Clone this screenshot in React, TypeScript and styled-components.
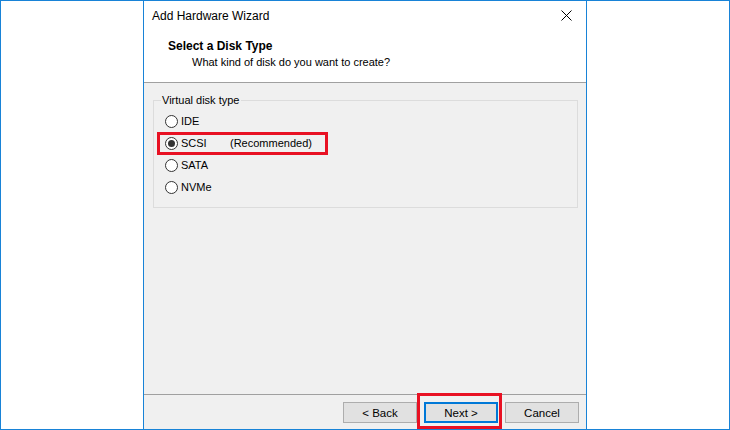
import React from "react";
import styled, { createGlobalStyle } from "styled-components";

const Global = createGlobalStyle`
  html, body { margin: 0; padding: 0; background: #fff; }
  body { font-family: "Liberation Sans", Arial, sans-serif; font-size: 11px; color: #000; }
`;

const Page = styled.div`
  box-sizing: border-box;
  width: 730px;
  height: 430px;
  border: 1px solid #1883d7;
  display: flex;
  background: #fff;
`;

const Side = styled.div<{ $w?: number }>`
  flex: ${(p) => (p.$w ? `0 0 ${p.$w}px` : "1 1 auto")};
  background: #fff;
`;

const Dialog = styled.div`
  box-sizing: border-box;
  flex: 0 0 444px;
  border-left: 1px solid #1883d7;
  border-right: 1px solid #1883d7;
  display: flex;
  flex-direction: column;
`;

const TitleBar = styled.div`
  height: 29px;
  display: flex;
  align-items: center;
  justify-content: space-between;
  padding: 0 8px 0 8px;
  background: #fff;
`;

const TitleText = styled.span`
  font-size: 12px;
  padding-top: 1px;
`;

const CloseBtn = styled.span`
  display: flex;
  align-items: center;
  justify-content: center;
  width: 20px;
  height: 20px;
  margin-right: 2px;
`;

const Header = styled.div`
  height: 53px;
  box-sizing: border-box;
  background: #fff;
  border-bottom: 1px solid #a0a0a0;
  padding: 9px 0 0 24px;
`;

const HeaderTitle = styled.div`
  font-weight: bold;
  font-size: 12px;
  line-height: 15px;
`;

const HeaderSub = styled.div`
  font-size: 11px;
  line-height: 15px;
  margin-top: 1px;
  padding-left: 24px;
`;

const Body = styled.div`
  flex: 1 1 auto;
  background: #f0f0f0;
  border-bottom: 1px solid #a0a0a0;
  padding: 10px 8px 0 9px;
`;

const Group = styled.fieldset`
  box-sizing: border-box;
  height: 115px;
  margin: 0;
  padding: 3px 0 0 11px;
  border: 1px solid #dcdcdc;
  position: relative;
`;

const Legend = styled.legend`
  padding: 0 2px 0 1px;
  margin-left: -4px;
  font-size: 11px;
  line-height: 14px;
`;

const Row = styled.div<{ $hl?: boolean }>`
  position: relative;
  height: 22px;
  display: flex;
  align-items: center;
  ${(p) =>
    p.$hl &&
    `
    &::after {
      content: "";
      position: absolute;
      left: -8px;
      top: 0px;
      width: 171px;
      height: 23px;
      box-sizing: border-box;
      border: 3px solid #e81123;
      pointer-events: none;
    }
  `}
`;

const Radio = styled.span<{ $on?: boolean }>`
  box-sizing: border-box;
  width: 13px;
  height: 13px;
  border-radius: 50%;
  border: 1px solid #333;
  background: #fff;
  display: inline-flex;
  align-items: center;
  justify-content: center;
  margin-right: 3px;
  &::before {
    content: "";
    display: ${(p) => (p.$on ? "block" : "none")};
    width: 7px;
    height: 7px;
    border-radius: 50%;
    background: #333;
  }
`;

const Label = styled.span<{ $w?: number }>`
  display: inline-block;
  ${(p) => (p.$w ? `width: ${p.$w}px;` : "")}
`;

const Footer = styled.div`
  height: 34px;
  background: #f0f0f0;
  display: flex;
  justify-content: flex-end;
  align-items: flex-start;
  gap: 7px;
  padding: 7px 7px 0 0;
  box-sizing: border-box;
`;

const Button = styled.button<{ $def?: boolean; $hl?: boolean }>`
  position: relative;
  box-sizing: border-box;
  width: 74px;
  height: 21px;
  margin: 0;
  padding: 0;
  background: #e1e1e1;
  border: ${(p) => (p.$def ? "2px solid #0078d7" : "1px solid #adadad")};
  font-family: "Liberation Sans", Arial, sans-serif;
  font-size: 11.5px;
  color: #000;
  ${(p) =>
    p.$hl &&
    `
    &::after {
      content: "";
      position: absolute;
      left: -9px;
      top: -11px;
      width: 85px;
      height: 36px;
      box-sizing: border-box;
      border: 3px solid #e81123;
      pointer-events: none;
    }
  `}
`;

const options = [
  { name: "IDE", on: false },
  { name: "SCSI", on: true, note: "(Recommended)" },
  { name: "SATA", on: false },
  { name: "NVMe", on: false },
];

export default function App() {
  return (
    <>
      <Global />
      <Page>
        <Side $w={142} />
        <Dialog>
          <TitleBar>
            <TitleText>Add Hardware Wizard</TitleText>
            <CloseBtn>
              <svg width="11" height="11" viewBox="0 0 11 11">
                <path d="M0.5 0.5 L10.5 10.5 M10.5 0.5 L0.5 10.5" stroke="#000" strokeWidth="1" />
              </svg>
            </CloseBtn>
          </TitleBar>
          <Header>
            <HeaderTitle>Select a Disk Type</HeaderTitle>
            <HeaderSub>What kind of disk do you want to create?</HeaderSub>
          </Header>
          <Body>
            <Group>
              <Legend>Virtual disk type</Legend>
              {options.map((o) => (
                <Row key={o.name} $hl={o.on}>
                  <Radio $on={o.on} />
                  <Label $w={o.note ? 49 : undefined}>{o.name}</Label>
                  {o.note && <Label>{o.note}</Label>}
                </Row>
              ))}
            </Group>
          </Body>
          <Footer>
            <Button>&lt; Back</Button>
            <Button $def $hl>
              Next &gt;
            </Button>
            <Button>Cancel</Button>
          </Footer>
        </Dialog>
        <Side />
      </Page>
    </>
  );
}
